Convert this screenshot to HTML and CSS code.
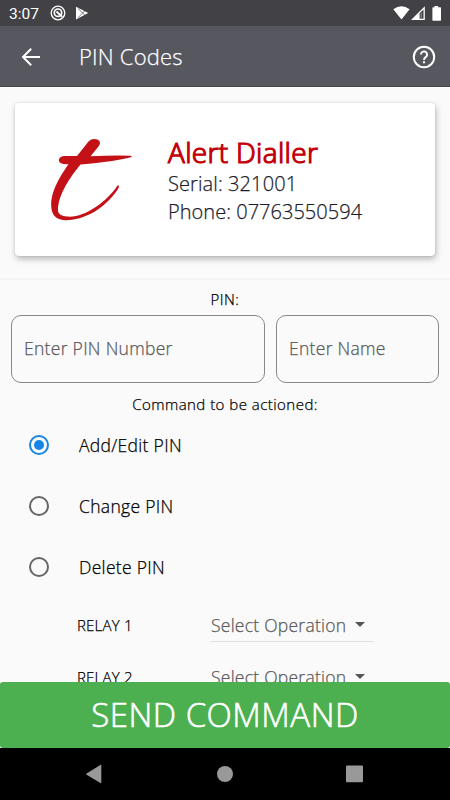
FILE: index.html
```html
<!DOCTYPE html>
<html lang="en">
<head>
<meta charset="utf-8">
<title>PIN Codes</title>
<link rel="stylesheet" href="styles.css">
</head>
<body>
<div class="screen">
  <div class="status">
    <span class="clock">3:07</span>
    <svg class="s-ring" width="16" height="16" viewBox="0 0 16 16"><circle cx="8" cy="8" r="6.8" fill="none" stroke="#fff" stroke-width="1.3"/><circle cx="8" cy="7.700" r="3.700" fill="none" stroke="#fff" stroke-width="1.7"/><path d="M6.500 6.500L12.300 11.800" stroke="#fff" stroke-width="1.8"/></svg>
    <svg class="s-play" width="14" height="14" viewBox="0 0 14 14"><path d="M1 .8L13.2 7 1 13.4z" fill="#fff"/><path d="M3 2.500L10 9.300M3 11.700L10 4.700" stroke="#424246" stroke-width=".7"/></svg>
    <svg class="s-right" width="50" height="18" viewBox="0 0 50 18"><path d="M.3 4.2Q8.5-1.8 16.6 4.2L8.500 14.400z" fill="#fff"/><path d="M31.800 1.200V15H18z" fill="#fff"/><path d="M30.500 4.500V13.700H26.600V8.200z" fill="#424246"/><path d="M28.200 7.600v6.200" stroke="#b8b8bc" stroke-width=".7"/><path d="M41.500 1h3.600v1.200h2.200q.7 0 .7.7v12q0 .8-.8.8h-7q-.8 0-.8-.8v-12q0-.7.7-.7h1.400z" fill="#fff"/></svg>
  </div>
  <header class="appbar">
    <svg class="back" width="22" height="22" viewBox="0 0 22 22"><path d="M20 11H3.400M11.200 2.800L3 11l8.200 8.200" fill="none" stroke="#fff" stroke-width="2"/></svg>
    <h1>PIN Codes</h1>
    <svg class="help" width="24" height="24" viewBox="0 0 24 24"><circle cx="12" cy="12" r="10.2" fill="none" stroke="#fff" stroke-width="2"/><path d="M8.900 9.600a3.100 3.100 0 1 1 5.200 2.200C13 12.800 12 13.200 12 15" fill="none" stroke="#fff" stroke-width="1.9"/><path d="M11 16.200h2v2h-2z" fill="#fff"/></svg>
  </header>
  <section class="device">
    <div class="card">
      <svg class="logo" width="84" height="84" viewBox="0 0 84 84"><path d="M38.500 3.500Q42 0 47.500 1.600Q52 4 48.500 8.500L40.500 18.200Q62 17.200 81 17.700Q82.700 18.400 80.800 19.200Q65 23.500 30.500 26.500C21 38 7.500 57 8 73Q8.500 77.800 17 78.500C33 80.500 57 64 67.300 47.700Q69.300 46.500 68.800 49.500C62 62 41 82.500 15 82.200Q1 81.500 1.200 67C1 52 12 35.500 18.500 26.300Q9 26.800 8.800 22Q9.500 18 15 18H27z" fill="#c41118"/></svg>
      <div class="info">
        <div class="name">Alert Dialler</div>
        <div class="line serial">Serial: 321001</div>
        <div class="line">Phone: 07763550594</div>
      </div>
    </div>
  </section>
  <main class="form">
    <div class="caption pin">PIN:</div>
    <div class="fields">
      <div class="field number">Enter PIN Number</div>
      <div class="field who">Enter Name</div>
    </div>
    <div class="caption command">Command to be actioned:</div>
    <div class="option on"><i></i><span>Add/Edit PIN</span></div>
    <div class="option"><i></i><span>Change PIN</span></div>
    <div class="option"><i></i><span>Delete PIN</span></div>
    <div class="relay"><span class="label">RELAY 1</span><div class="select"><span>Select Operation</span><b></b></div></div>
    <div class="relay"><span class="label">RELAY 2</span><div class="select"><span>Select Operation</span><b></b></div></div>
  </main>
  <div class="send">SEND COMMAND</div>
  <nav class="nav">
    <svg width="450" height="52" viewBox="0 0 450 52"><path d="M101.300 17.300V34.700Q101.300 35.500 100.400 35L86.600 26.700Q85.700 26 86.600 25.400L100.400 17Q101.300 16.500 101.300 17.300z" fill="#999"/><circle cx="225" cy="26" r="8" fill="#999"/><rect x="346" y="17.400" width="17" height="16.800" rx="1" fill="#999"/></svg>
  </nav>
</div>
</body>
</html>
```
FILE: styles.css
```css
* { box-sizing: border-box; }
body {
  margin: 0;
  background: #fafafa;
  font-family: "Open Sans", "Noto Sans", sans-serif;
  font-weight: 300;
  color: #000;
}
.screen {
  width: 450px;
  height: 800px;
  display: flex;
  flex-direction: column;
  overflow: hidden;
  white-space: nowrap;
  -webkit-text-stroke: .25px currentColor;
}
.status {
  height: 26px;
  flex: none;
  background: #424246;
  color: #fff;
  display: flex;
  align-items: center;
  padding: 0 7px 0 9px;
}
.clock {
  font: 400 15.5px/26px Roboto, sans-serif;
  width: 41px;
  padding-top: 1px;
  -webkit-text-stroke: 0;
}
.s-play { margin-left: 9px; }
.s-right { margin: 2px 0 0 auto; }
.appbar {
  height: 61px;
  flex: none;
  background: #57575f;
  border-bottom: 1px solid #45454b;
  display: flex;
  align-items: center;
  padding: 1px 14px 0 20px;
  color: #fff;
}
.appbar h1 {
  flex: 1;
  margin: -2px 0 0 37px;
  font-size: 22px;
  font-weight: 300;
  line-height: 30px;
  letter-spacing: .2px;
}
.device {
  height: 193px;
  flex: none;
  padding: 15px 15px 0;
  border-top: 1px solid #fff;
  border-bottom: 2px solid #f4f4f4;
}
.card {
  height: 153px;
  background: #fff;
  border-radius: 4px;
  box-shadow: 1px 3px 6px rgba(0, 0, 0, .27), 0 0 2px rgba(0, 0, 0, .12);
  display: flex;
  padding: 34px 0 0 35px;
}
.logo { margin-top: 1px; }
.info { margin-left: 34px; }
.name {
  font-size: 28px;
  line-height: 30px;
  padding-bottom: 2px;
  color: #c4000a;
  letter-spacing: .32px;
  -webkit-text-stroke: 1.2px #c4000a;
}
.line {
  font-size: 20px;
  line-height: 28px;
  color: #1c1c2c;
  letter-spacing: .03px;
}
.serial {
  margin-top: 1px;
  letter-spacing: .1px;
}
.form {
  height: 402px;
  flex: none;
  overflow: hidden;
}
.caption {
  text-align: center;
  font-size: 15px;
  line-height: 20px;
  letter-spacing: .47px;
}
.pin { padding-top: 9px; }
.fields {
  display: flex;
  gap: 11px;
  padding: 6px 11px 0;
}
.field {
  height: 68px;
  border: 1px solid #888;
  border-radius: 10px;
  padding-left: 12px;
  font-size: 17.5px;
  line-height: 65px;
  color: #5a5a5a;
  letter-spacing: .3px;
}
.number { width: 254px; }
.who { flex: 1; }
.command { padding-top: 11px; height: 32px; }
.option {
  height: 61px;
  display: flex;
  align-items: center;
  padding-left: 29px;
  font-size: 17.5px;
  letter-spacing: .32px;
}
.option span { margin-top: -2px; }
.option i {
  width: 20px;
  height: 20px;
  margin: -1px 30px 0 0;
  border: 2px solid #666;
  border-radius: 50%;
  padding: 3px;
}
.option.on i {
  border-color: #1684e8;
  background: #1684e8 content-box;
}
.relay {
  display: flex;
  height: 52px;
  padding-left: 77px;
}
.label {
  width: 133px;
  font-size: 15px;
  line-height: 54px;
  letter-spacing: .2px;
}
.select {
  width: 164px;
  height: 44px;
  border-bottom: 1px solid #e2e2e2;
  display: flex;
  align-items: center;
  padding: 11px 0 0 1px;
  font-size: 17.5px;
  letter-spacing: .25px;
  color: #5a5a5a;
}
.select b {
  margin: -1px 0 0 9px;
  border: 5px solid transparent;
  border-top-color: #555;
  border-bottom: 0;
}
.send {
  height: 66px;
  flex: none;
  background: #4caf50;
  border-radius: 3px;
  color: #fff;
  text-align: center;
  font-size: 33px;
  line-height: 66px;
  letter-spacing: .5px;
  -webkit-text-stroke-width: .6px;
}
.nav {
  height: 52px;
  flex: none;
  background: #000;
}
.nav svg { display: block; }
```
